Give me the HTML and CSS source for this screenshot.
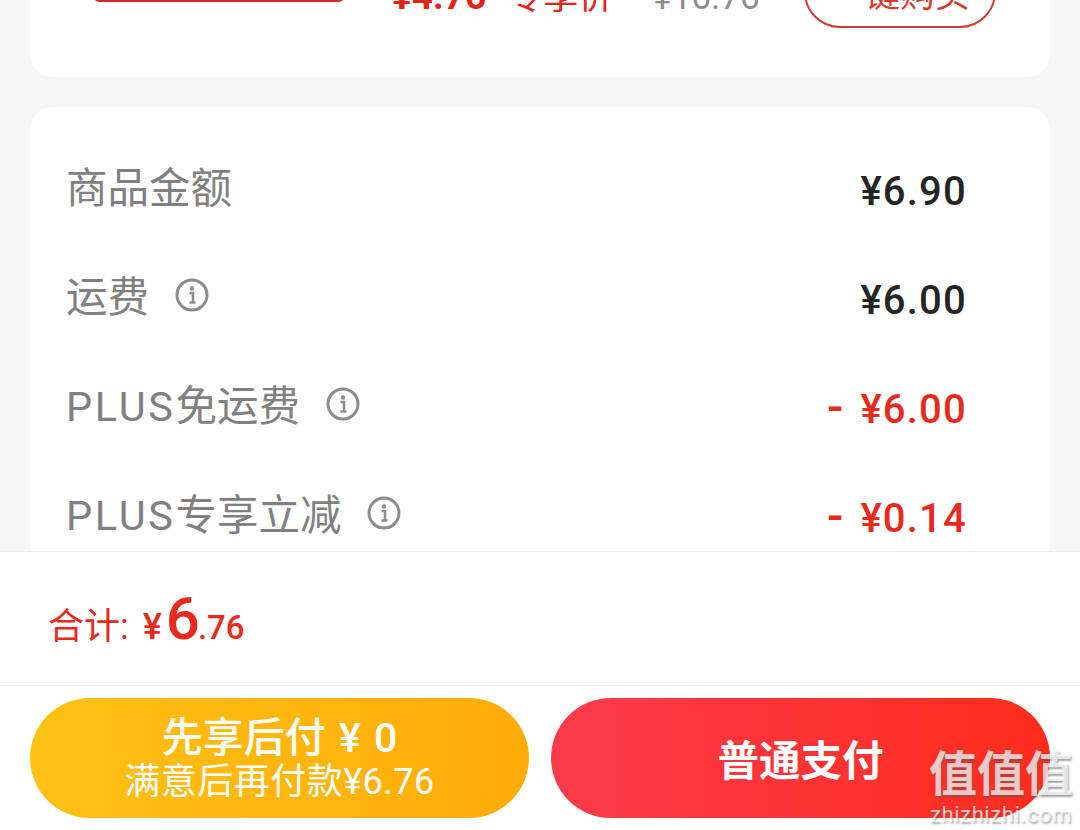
FILE: index.html
```html
<!DOCTYPE html>
<html lang="zh-CN">
<head>
    <meta charset="UTF-8">
    <title>确认订单</title>
    <link rel="stylesheet" href="styles.css">
</head>
<body>
    <main class="content">
        <section class="card plus-card">
            <div class="plus-bar"></div>
            <div class="plus-prices">
                <span class="plus-price">¥4.76</span>
                <span class="plus-tag">专享价</span>
                <span class="plus-old">¥16.76</span>
            </div>
            <button class="plus-buy">一键购买</button>
        </section>
        <section class="card amounts">
            <div class="row">
                <span class="label">商品金额</span>
                <span class="value">¥6.90</span>
            </div>
            <div class="row">
                <span class="label">运费
                    <svg class="info" viewBox="0 0 34 34"><circle cx="17" cy="17" r="15" fill="none" stroke="#8c8c8c" stroke-width="3"/><circle cx="17" cy="10.5" r="2.2" fill="#8c8c8c"/><path d="M14.5 15H18V24M14.5 24.5H20.5" fill="none" stroke="#8c8c8c" stroke-width="2.6"/></svg>
                </span>
                <span class="value">¥6.00</span>
            </div>
            <div class="row">
                <span class="label"><span><span class="latin">PLUS</span>免运费</span>
                    <svg class="info" viewBox="0 0 34 34"><circle cx="17" cy="17" r="15" fill="none" stroke="#8c8c8c" stroke-width="3"/><circle cx="17" cy="10.5" r="2.2" fill="#8c8c8c"/><path d="M14.5 15H18V24M14.5 24.5H20.5" fill="none" stroke="#8c8c8c" stroke-width="2.6"/></svg>
                </span>
                <span class="value minus"><i>-</i>¥6.00</span>
            </div>
            <div class="row">
                <span class="label"><span><span class="latin">PLUS</span>专享立减</span>
                    <svg class="info" viewBox="0 0 34 34"><circle cx="17" cy="17" r="15" fill="none" stroke="#8c8c8c" stroke-width="3"/><circle cx="17" cy="10.5" r="2.2" fill="#8c8c8c"/><path d="M14.5 15H18V24M14.5 24.5H20.5" fill="none" stroke="#8c8c8c" stroke-width="2.6"/></svg>
                </span>
                <span class="value minus"><i>-</i>¥0.14</span>
            </div>
        </section>
    </main>
    <footer class="footer">
        <div class="total">
            <span class="total-label">合计:</span>
            <span class="total-yen">¥</span><span class="total-int">6</span><span class="total-dec">.76</span>
        </div>
        <div class="actions">
            <button class="pay pay-later">
                <span class="pay-main">先享后付 ¥ 0</span>
                <span class="pay-sub">满意后再付款¥6.76</span>
            </button>
            <button class="pay pay-now">普通支付</button>
        </div>
    </footer>
    <div class="watermark">
        <span class="wm-glyphs">值值值</span>
        <span class="wm-site">zhizhizhi.com</span>
    </div>
</body>
</html>
```

FILE: styles.css
```css
html, body {
    margin: 0;
    height: 830px;
    overflow: hidden;
}
body {
    position: relative;
    background: #fff;
    font-family: 'Roboto', 'Noto Sans CJK SC', sans-serif;
    display: flex;
    flex-direction: column;
}
button {
    border: 0;
    padding: 0;
    background: none;
    font-family: inherit;
}
.content {
    height: 551px;
    overflow: hidden;
    flex: none;
    background: #f5f5f5;
    padding: 0 30px;
    box-sizing: border-box;
}
.card {
    background: #fff;
    border-radius: 22px;
}

/* clipped card at the top */
.plus-card {
    height: 77px;
    margin-bottom: 30px;
    border-radius: 0 0 22px 22px;
    box-sizing: border-box;
    padding: 0 54px 49px 62px;
    display: flex;
    align-items: flex-end;
}
.plus-bar {
    width: 254px;
    height: 20px;
    margin-bottom: 26px;
    background: #d9262e;
    border-radius: 0 0 8px 8px;
    flex: none;
}
.plus-prices {
    display: flex;
    align-items: baseline;
    margin-left: 46px;
    margin-bottom: 10px;
    line-height: 40px;
    white-space: nowrap;
}
.plus-price {
    color: #e2231a;
    font-size: 37px;
    font-weight: 700;
    margin-right: 22px;
}
.plus-tag {
    color: #e2231a;
    font-size: 35px;
    margin-right: 40px;
}
.plus-old {
    color: #8c8c8c;
    font-size: 35px;
}
.plus-buy {
    margin-left: auto;
    width: 192px;
    height: 73px;
    box-sizing: border-box;
    border: 2px solid #d8392f;
    border-radius: 36px;
    color: #d8392f;
    font-size: 35px;
    flex: none;
}

.amounts {
    padding: 29px 84px 0 36px;
    height: 600px;
    box-sizing: border-box;
}
.row {
    height: 109px;
    display: flex;
    justify-content: space-between;
    align-items: center;
}
.label {
    display: flex;
    align-items: center;
    gap: 26px;
    margin-top: -12px;
    font-size: 41.5px;
    color: #808080;
}
.latin {
    letter-spacing: 2.6px;
}
.info {
    width: 34px;
    height: 34px;
    margin-top: 2px;
}
.value {
    font-size: 40px;
    line-height: 46px;
    font-weight: 500;
    letter-spacing: 1.2px;
    color: #252525;
    margin-top: 2px;
    margin-right: -1px;
}
.minus {
    color: #e8291c;
}
.minus i {
    font-style: normal;
    font-size: 48px;
    line-height: 0;
    font-weight: 500;
    margin-right: 16px;
}

.footer {
    flex: 1;
    border-top: 1px solid #eee;
    background: #fff;
}
.total {
    height: 134px;
    box-sizing: border-box;
    padding: 32px 0 0 48px;
    border-bottom: 1px solid #eee;
    color: #e8291c;
    line-height: 70px;
    white-space: nowrap;
}
.total-label {
    font-size: 36px;
    margin-right: 10px;
}
.total-yen {
    font-size: 36px;
    font-weight: 500;
    margin-right: 4px;
}
.total-int {
    font-size: 60px;
    font-weight: 500;
}
.total-dec {
    font-size: 33px;
    font-weight: 500;
    margin-left: -2px;
}
.actions {
    display: flex;
    justify-content: space-between;
    padding: 12px 30px 0;
}
.pay {
    width: 499px;
    height: 120px;
    border-radius: 60px;
    color: #fff;
}
.pay-later {
    background: linear-gradient(90deg, #ffc116, #ffab08);
    display: flex;
    flex-direction: column;
    align-items: center;
    justify-content: center;
}
.pay-main {
    font-size: 41px;
    font-weight: 500;
    line-height: 46px;
    word-spacing: 3px;
    margin-top: 2px;
}
.pay-sub {
    font-size: 36px;
    line-height: 42px;
    letter-spacing: 0.5px;
}
.pay-now {
    background: linear-gradient(90deg, #fb3a4c, #ff2c1c);
    font-size: 41.5px;
    font-weight: 700;
}

.watermark {
    position: absolute;
    left: 929px;
    top: 747px;
    width: 144px;
    display: flex;
    flex-direction: column;
    align-items: center;
    color: rgba(255, 255, 255, 0.72);
    text-shadow: 1px 2px 2px rgba(90, 90, 90, 0.55);
}
.wm-glyphs {
    font-size: 48px;
    line-height: 56px;
    font-weight: 700;
    white-space: nowrap;
}
.wm-site {
    font-size: 22px;
    line-height: 24px;
    letter-spacing: 0.6px;
}
```
